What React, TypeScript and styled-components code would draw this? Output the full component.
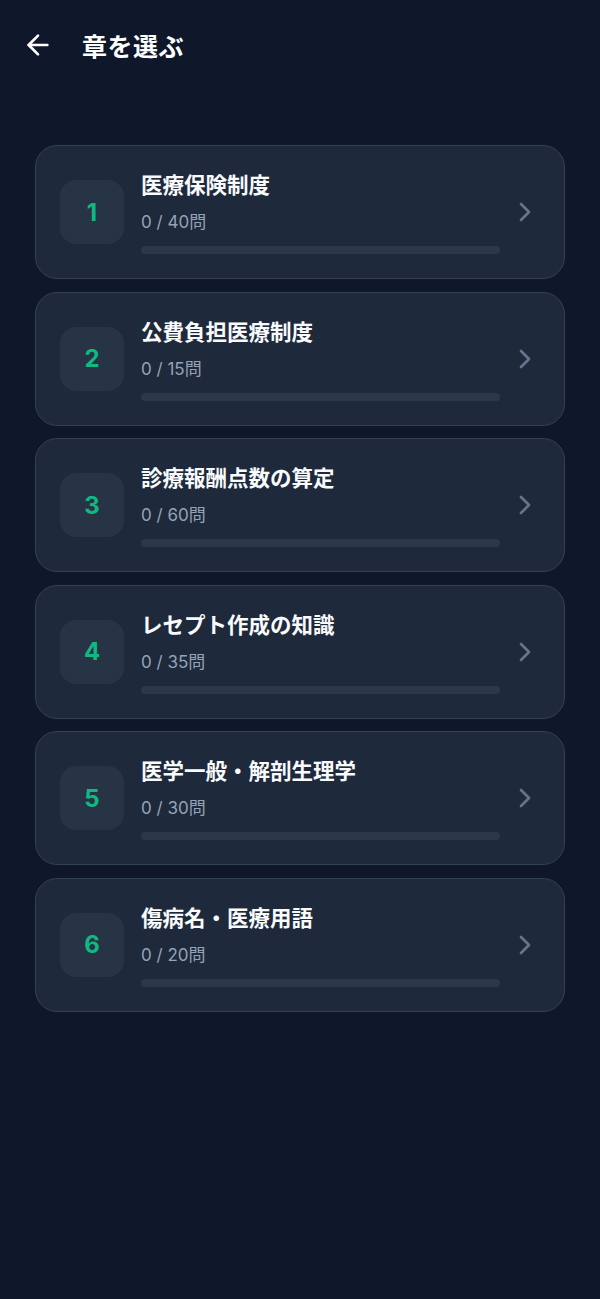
import React from 'react';
import styled, { createGlobalStyle } from 'styled-components';

const GlobalStyle = createGlobalStyle`
  * { box-sizing: border-box; }
  html, body { margin: 0; padding: 0; background: #0f172a; }
  body {
    font-family: Inter, "Noto Sans CJK JP", "Noto Sans", sans-serif;
    -webkit-font-smoothing: antialiased;
  }
`;

const Screen = styled.div`
  min-height: 1299px;
  width: 600px;
  background: #0f172a;
  color: #fff;
`;

const TopBar = styled.header`
  height: 90px;
  display: flex;
  align-items: center;
  padding: 0 22px;
  gap: 28px;
`;

const BackButton = styled.button`
  width: 32px;
  height: 32px;
  padding: 0;
  border: none;
  background: none;
  color: #fff;
  display: flex;
  align-items: center;
  justify-content: center;
  cursor: pointer;
`;

const Title = styled.h1`
  margin: 0;
  font-size: 25px;
  font-weight: 700;
  letter-spacing: 0.5px;
`;

const List = styled.div`
  display: flex;
  flex-direction: column;
  gap: 12.5px;
  padding: 55px 35px 40px;
`;

const Card = styled.div`
  display: flex;
  align-items: center;
  gap: 17px;
  padding: 24px;
  background: #1e293b;
  border: 1px solid #334155;
  border-radius: 22px;
  cursor: pointer;
`;

const NumberBox = styled.div`
  flex: 0 0 64px;
  width: 64px;
  height: 64px;
  border-radius: 16px;
  background: #273446;
  display: flex;
  align-items: center;
  justify-content: center;
  color: #10b981;
  font-size: 24px;
  font-weight: 700;
`;

const Body = styled.div`
  flex: 1;
  min-width: 0;
  display: flex;
  flex-direction: column;
`;

const ChapterName = styled.div`
  font-size: 21.5px;
  font-weight: 700;
  line-height: 30px;
  color: #f8fafc;
`;

const Count = styled.div`
  margin-top: 10px;
  font-size: 17px;
  line-height: 24px;
  color: #94a3b8;
`;

const Track = styled.div`
  margin-top: 12px;
  height: 8px;
  border-radius: 4px;
  background: #2b384b;
  overflow: hidden;
`;

const Fill = styled.div`
  height: 100%;
  background: #10b981;
  border-radius: 4px;
`;

const Chevron = styled.div`
  flex: 0 0 32px;
  display: flex;
  color: #64748b;
  margin-left: -8px;
  margin-right: -1px;
`;

const chapters = [
  { no: 1, name: '医療保険制度', done: 0, total: 40 },
  { no: 2, name: '公費負担医療制度', done: 0, total: 15 },
  { no: 3, name: '診療報酬点数の算定', done: 0, total: 60 },
  { no: 4, name: 'レセプト作成の知識', done: 0, total: 35 },
  { no: 5, name: '医学一般・解剖生理学', done: 0, total: 30 },
  { no: 6, name: '傷病名・医療用語', done: 0, total: 20 },
];

const App: React.FC = () => (
  <Screen>
    <GlobalStyle />
    <TopBar>
      <BackButton aria-label="戻る">
        <svg width="32" height="32" viewBox="0 0 24 24" fill="none" stroke="currentColor" strokeWidth="2" strokeLinecap="round" strokeLinejoin="round">
          <path d="m12 19-7-7 7-7" />
          <path d="M19 12H5" />
        </svg>
      </BackButton>
      <Title>章を選ぶ</Title>
    </TopBar>

    <List>
      {chapters.map((c) => (
        <Card key={c.no}>
          <NumberBox>{c.no}</NumberBox>
          <Body>
            <ChapterName>{c.name}</ChapterName>
            <Count>{c.done} / {c.total}問</Count>
            <Track>
              <Fill style={{ width: `${(c.done / c.total) * 100}%` }} />
            </Track>
          </Body>
          <Chevron>
            <svg width="32" height="32" viewBox="0 0 24 24" fill="none" stroke="currentColor" strokeWidth="2" strokeLinecap="round" strokeLinejoin="round">
              <path d="m9 18 6-6-6-6" />
            </svg>
          </Chevron>
        </Card>
      ))}
    </List>
  </Screen>
);

export default App;
